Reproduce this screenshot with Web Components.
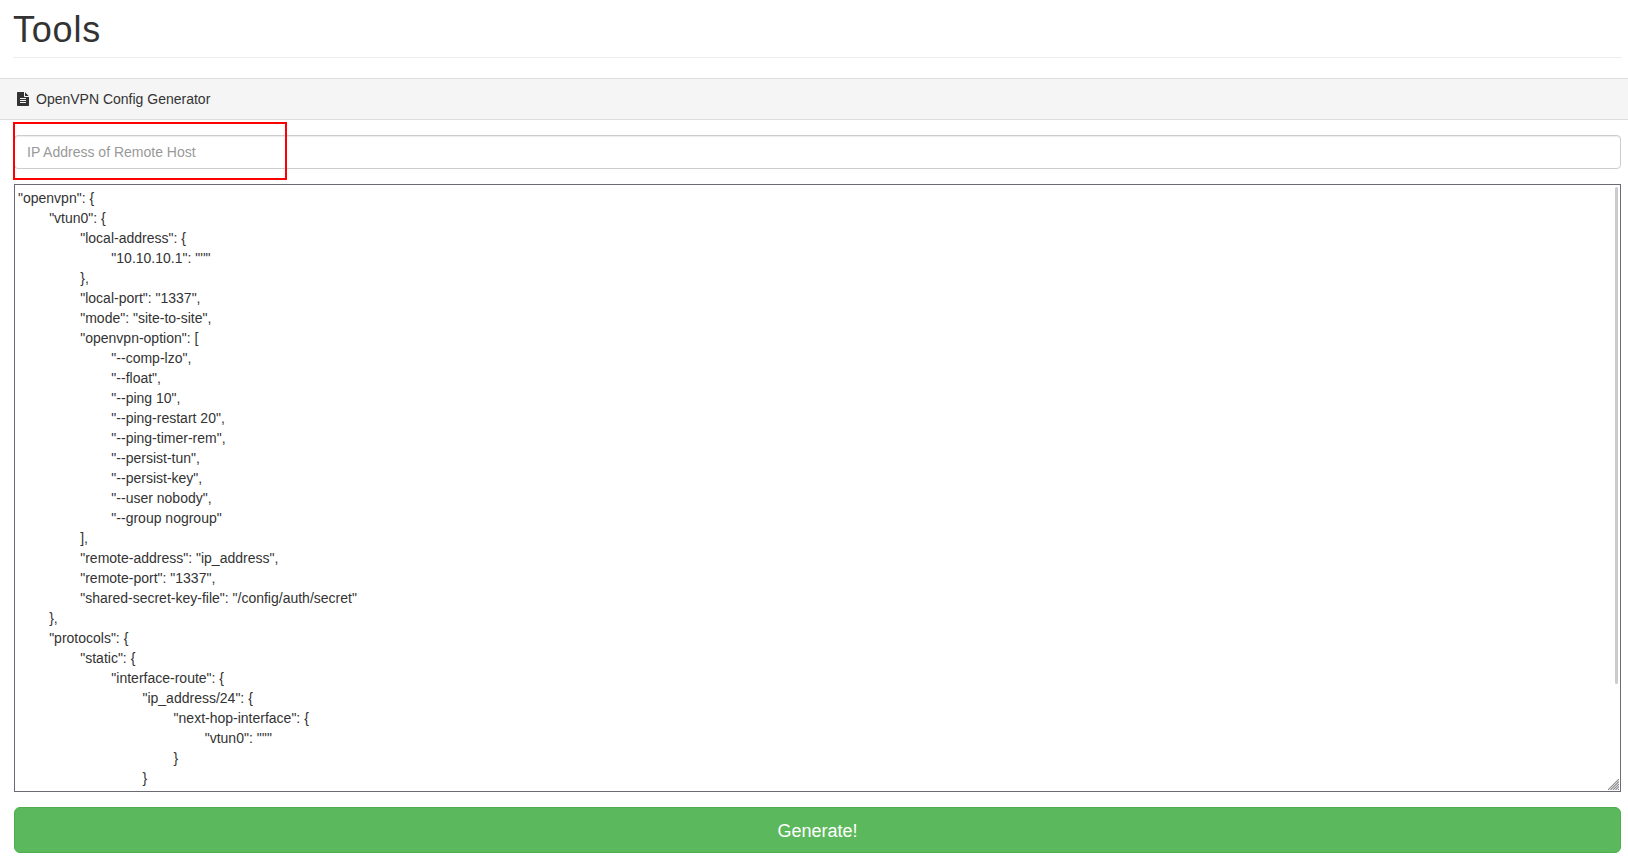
<!DOCTYPE html>
<html>
<head>
<meta charset="utf-8">
<title>Tools</title>
<style>
  html, body { margin: 0; padding: 0; background: #fff; }
  body { font: 14px/20px "Liberation Sans", Arial, sans-serif; color: #333; overflow: hidden; }
</style>
</head>
<body>
<tools-page>
  <page-title slot="title">Tools</page-title>
  <tool-panel slot="panel" heading="OpenVPN Config Generator">
    <ip-field placeholder="IP Address of Remote Host"></ip-field>
    <config-editor>"openvpn": {
	"vtun0": {
		"local-address": {
			"10.10.10.1": "''"
		},
		"local-port": "1337",
		"mode": "site-to-site",
		"openvpn-option": [
			"--comp-lzo",
			"--float",
			"--ping 10",
			"--ping-restart 20",
			"--ping-timer-rem",
			"--persist-tun",
			"--persist-key",
			"--user nobody",
			"--group nogroup"
		],
		"remote-address": "ip_address",
		"remote-port": "1337",
		"shared-secret-key-file": "/config/auth/secret"
	},
	"protocols": {
		"static": {
			"interface-route": {
				"ip_address/24": {
					"next-hop-interface": {
						"vtun0": "''"
					}
				}
			}
		}
	}
}</config-editor>
    <generate-button>Generate!</generate-button>
  </tool-panel>
</tools-page>

<script>
class ToolsPage extends HTMLElement {
  constructor() {
    super();
    this.attachShadow({ mode: 'open' }).innerHTML = `
      <style>
        :host { display: block; }
      </style>
      <slot name="title"></slot>
      <slot name="panel"></slot>
    `;
  }
}

class PageTitle extends HTMLElement {
  constructor() {
    super();
    this.attachShadow({ mode: 'open' }).innerHTML = `
      <style>
        :host { display: block; margin: 0 6px 20px 13px; border-bottom: 1px solid #eee; padding: 10px 0 7px; }
        h1 { margin: 0; font-size: 36px; line-height: 39.6px; font-weight: 500; color: #333; letter-spacing: .8px; }
      </style>
      <h1><slot></slot></h1>
    `;
  }
}

class ToolPanel extends HTMLElement {
  constructor() {
    super();
    this.attachShadow({ mode: 'open' }).innerHTML = `
      <style>
        :host { display: block; position: relative; }
        .heading {
          display: flex; align-items: center; gap: 6px;
          height: 40px; padding: 0 16px; box-sizing: content-box;
          background: #f5f5f5; border-top: 1px solid #ddd; border-bottom: 1px solid #ddd;
        }
        svg { width: 14px; height: 14px; fill: #333; }
        .body { display: flex; flex-direction: column; padding: 15px 7px 0 14px; }
        .mark { position: absolute; left: 13px; top: 44px; width: 270px; height: 54px; border: 2px solid #f00; pointer-events: none; }
      </style>
      <div class="heading">
        <svg viewBox="0 0 1792 1792"><path d="M1596 476q14 14 28 36h-472v-472q22 14 36 28zm-476 164h544v1056q0 40-28 68t-68 28h-1344q-40 0-68-28t-28-68v-1600q0-40 28-68t68-28h800v544q0 40 28 68t68 28zm160 736v-64q0-14-9-23t-23-9h-704q-14 0-23 9t-9 23v64q0 14 9 23t23 9h704q14 0 23-9t9-23zm0-256v-64q0-14-9-23t-23-9h-704q-14 0-23 9t-9 23v64q0 14 9 23t23 9h704q14 0 23-9t9-23zm0-256v-64q0-14-9-23t-23-9h-704q-14 0-23 9t-9 23v64q0 14 9 23t23 9h704q14 0 23-9t9-23z"/></svg>
        <span id="heading"></span>
      </div>
      <div class="body"><slot></slot></div>
      <div class="mark"></div>
    `;
  }

  connectedCallback() {
    this.shadowRoot.getElementById('heading').textContent = this.getAttribute('heading') || '';
  }
}

class IpField extends HTMLElement {
  constructor() {
    super();
    this.attachShadow({ mode: 'open' }).innerHTML = `
      <style>
        :host { display: block; margin-bottom: 15px; }
        input {
          display: block; width: 100%; height: 34px; box-sizing: border-box;
          padding: 6px 12px; font: 14px/20px "Liberation Sans", Arial, sans-serif; color: #555;
          background: #fff; border: 1px solid #ccc; border-radius: 4px;
          box-shadow: inset 0 1px 1px rgba(0,0,0,.075); outline: none;
        }
        input::placeholder { color: #999; opacity: 1; }
      </style>
      <input type="text">
    `;
  }

  connectedCallback() {
    this.shadowRoot.querySelector('input').placeholder = this.getAttribute('placeholder') || '';
  }
}

class ConfigEditor extends HTMLElement {
  constructor() {
    super();
    this.attachShadow({ mode: 'open' }).innerHTML = `
      <style>
        :host { display: block; position: relative; margin-bottom: 15px; }
        .box {
          height: 601px; padding: 3px 2px 2px 3px; overflow: hidden;
          border: 1px solid #6b6b76; white-space: pre; tab-size: 8;
          font: 14px/20px "Liberation Sans", Arial, sans-serif; color: #333;
        }
        .thumb { position: absolute; top: 3px; right: 3px; width: 3px; height: 497px; background: #ccc; border-radius: 2px; }
        .grip { position: absolute; right: 2px; bottom: 2px; width: 11px; height: 11px; stroke: #8c8c8c; stroke-width: 1.1; }
      </style>
      <div class="box"><slot></slot></div>
      <div class="thumb"></div>
      <svg class="grip" viewBox="0 0 11 11"><path d="M0 11L11 0M2.5 11L11 2.5M5 11L11 5M7.5 11L11 7.5M10 11L11 10"/></svg>
    `;
  }
}

class GenerateButton extends HTMLElement {
  constructor() {
    super();
    this.attachShadow({ mode: 'open' }).innerHTML = `
      <style>
        :host { display: block; }
        button {
          display: block; width: 100%; height: 46px; padding: 12px 16px 8px;
          font: 18px/1.33 "Liberation Sans", Arial, sans-serif; color: #fff;
          background: #5cb85c; border: 1px solid #4cae4c; border-radius: 6px;
        }
      </style>
      <button type="button"><slot></slot></button>
    `;
  }
}

customElements.define('tools-page', ToolsPage);
customElements.define('page-title', PageTitle);
customElements.define('tool-panel', ToolPanel);
customElements.define('ip-field', IpField);
customElements.define('config-editor', ConfigEditor);
customElements.define('generate-button', GenerateButton);
</script>
</body>
</html>
